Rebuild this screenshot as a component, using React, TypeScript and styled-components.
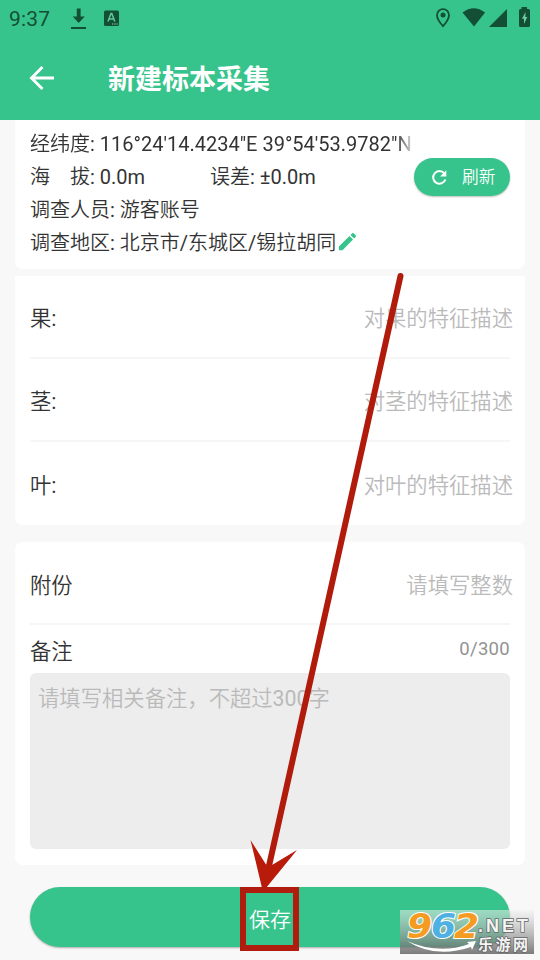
import React from "react";
import styled, { createGlobalStyle } from "styled-components";

const GREEN = "#36c48c";
const DARK = "#134f35";
const SANS = `Roboto, "Noto Sans CJK SC DemiLight", "Noto Sans CJK SC", sans-serif`;

const GlobalStyle = createGlobalStyle`
  * { box-sizing: border-box; }
  body { margin: 0; background: #f8f8f8; font-family: ${SANS}; }
`;

const Screen = styled.main`
  position: relative;
  width: 540px;
  height: 960px;
  overflow: hidden;
  display: flex;
  flex-direction: column;
  background: #f8f8f8;
  color: #333;
`;

const Header = styled.header`
  flex: none;
  height: 120px;
  background: ${GREEN};
`;

const StatusBar = styled.div`
  height: 36px;
  padding-left: 9px;
  padding-right: 9px;
  display: flex;
  align-items: center;
  color: ${DARK};
`;

const Clock = styled.span`
  width: 61px;
  font-size: 21px;
  line-height: 24px;
  letter-spacing: 0.2px;
  padding-top: 2px;
`;

const StatusIcons = styled.svg<{ $end?: boolean }>`
  display: block;
  margin-left: ${(p) => (p.$end ? "auto" : "0")};
`;

const TitleBar = styled.div`
  height: 84px;
  padding-left: 29px;
  display: flex;
  align-items: center;
  gap: 53px;
`;

const Title = styled.h1`
  margin: 0;
  padding-top: 4px;
  color: #fff;
  font-family: Roboto, "Noto Sans CJK SC", sans-serif;
  font-size: 27px;
  line-height: 36px;
  font-weight: 700;
`;

const InfoCard = styled.section`
  flex: none;
  height: 149px;
  margin: 0 15px;
  padding: 7px 15px 0;
  background: #fff;
  border-radius: 0 0 8px 8px;
  display: flex;
  justify-content: space-between;
`;

const InfoLines = styled.div`
  width: 384px;
  font-size: 20px;
  line-height: 33px;
  white-space: nowrap;
`;

const InfoLine = styled.div<{ $fade?: boolean }>`
  height: 33px;
  padding-top: 1px;
  display: flex;
  align-items: center;
  overflow: hidden;
  ${(p) => p.$fade && "mask-image: linear-gradient(to right, #000 366px, transparent 386px);"}
`;

const Half = styled.span`
  width: 180px;
  white-space: pre;
`;

const EditIcon = styled.svg`
  display: block;
  margin-bottom: 3px;
`;

const RefreshButton = styled.button`
  flex: none;
  width: 96px;
  height: 38px;
  margin: 31px 0 0 0;
  padding: 0 0 0 17px;
  border: 0;
  border-radius: 19px;
  background: ${GREEN};
  color: #fff;
  font: 16.7px/24px ${SANS};
  display: flex;
  align-items: center;
  gap: 14px;
  white-space: nowrap;
  box-shadow: 0 1px 2px rgba(0, 0, 0, 0.25);
`;

const RefreshLabel = styled.span`
  padding-top: 2px;
`;

const Card = styled.section<{ $clipped?: boolean }>`
  flex: none;
  margin: ${(p) => (p.$clipped ? "7px 15px 0" : "17px 15px 0")};
  height: ${(p) => (p.$clipped ? "249px" : "323px")};
  padding: 0 15px;
  background: #fff;
  border-radius: ${(p) => (p.$clipped ? "0 0 8px 8px" : "8px")};
`;

const Field = styled.label<{ $last?: boolean; $h?: number }>`
  height: ${(p) => p.$h ?? 83.5}px;
  padding-top: ${(p) => (p.$last ? 4 : 6)}px;
  display: flex;
  align-items: center;
  justify-content: space-between;
  font-size: 21.33px;
  line-height: 32px;
  border-bottom: ${(p) => (p.$last ? "0" : "2px solid #f6f6f6")};
`;

const Hint = styled.span`
  color: #bababa;
  margin-right: -3px;
`;

const NoteHead = styled.div`
  height: 48px;
  display: flex;
  align-items: center;
  justify-content: space-between;
  font-size: 21.33px;
`;

const Counter = styled.span`
  color: #929292;
  font-size: 18.5px;
  letter-spacing: 0.3px;
`;

const NoteBox = styled.div`
  height: 176px;
  padding: 10px 8px;
  border-radius: 6px;
  background: #ededed;
  color: #bababa;
  font-size: 21.33px;
  line-height: 32px;
`;

const SaveButton = styled.button`
  flex: none;
  height: 60px;
  margin: 22px 30px 0;
  padding: 6px 0 0;
  border: 0;
  border-radius: 30px;
  background: ${GREEN};
  color: #fff;
  font: 21px/32px ${SANS};
  box-shadow: 0 1px 2px rgba(0, 0, 0, 0.3);
`;

const Annotation = styled.svg`
  position: absolute;
  left: 0;
  top: 0;
  pointer-events: none;
`;

const Watermark = styled.svg`
  position: absolute;
  left: 400px;
  top: 910px;
  overflow: visible;
`;

const features = [
  { label: "果:", hint: "对果的特征描述" },
  { label: "茎:", hint: "对茎的特征描述" },
  { label: "叶:", hint: "对叶的特征描述" },
];

function LeftStatus() {
  return (
    <StatusIcons width="52" height="36" viewBox="70 0 52 36" fill={DARK}>
      <path d="M76.800 8.500h3.800v8h4.200L78.700 23l-6-6.500h4.100zM71 27h15v2H71z" />
      <rect x="104" y="10.500" width="15" height="15.500" rx="1.500" />
      <path d="m108 21.500 3-8h.8l3 8M109 19h5" fill="none" stroke="#5fc99b" strokeWidth="1.500" />
      <path d="M112 24h1.300m1 0h1.300m1 0h1.200" stroke="#8edab9" strokeWidth="1.200" />
    </StatusIcons>
  );
}

function RightStatus() {
  return (
    <StatusIcons $end width="96" height="36" viewBox="435 0 96 36" fill={DARK}>
      <path
        d="M443 9.200c-3.400 0-6 2.700-6 6 0 4.200 6 11 6 11s6-6.800 6-11c0-3.300-2.600-6-6-6z"
        fill="none"
        stroke={DARK}
        strokeWidth="1.800"
      />
      <circle cx="443" cy="15" r="2.500" />
      <path d="M462.500 12.500q11.300-8.500 22.600 0L474 26.500z" />
      <path d="M489 27 507 9v18z" />
      <path d="M521.500 7h5.500v2h1.500q1.500 0 1.500 1.500v15q0 1.500-1.500 1.500h-8q-1.500 0-1.500-1.500v-15q0-1.500 1.500-1.500h1z" />
      <path d="m525.500 12-3.500 6.700h2v5.300l3.300-7h-2z" fill="#6dcda3" />
    </StatusIcons>
  );
}

export default function App() {
  return (
    <>
      <GlobalStyle />
      <Screen>
        <Header>
          <StatusBar>
            <Clock>9:37</Clock>
            <LeftStatus />
            <RightStatus />
          </StatusBar>
          <TitleBar>
            <svg width="26" height="26" viewBox="0 0 26 26" fill="none" stroke="#fff" strokeWidth="2.900">
              <path d="M13.500 2 2.500 13l11 11M2.500 13H25" />
            </svg>
            <Title>新建标本采集</Title>
          </TitleBar>
        </Header>

        <InfoCard>
          <InfoLines>
            <InfoLine $fade>经纬度: 116°24'14.4234"E 39°54'53.9782"N</InfoLine>
            <InfoLine>
              <Half>海　拔: 0.0m</Half>
              <span>误差: ±0.0m</span>
            </InfoLine>
            <InfoLine>调查人员: 游客账号</InfoLine>
            <InfoLine>
              调查地区: 北京市/东城区/锡拉胡同
              <EditIcon width="23" height="23" viewBox="0 0 24 24" fill={GREEN}>
                <path d="M3 17.250V21h3.750L17.810 9.940l-3.750-3.750L3 17.250zM20.710 7.040a1 1 0 0 0 0-1.410l-2.340-2.340a1 1 0 0 0-1.410 0l-1.830 1.830 3.750 3.750 1.830-1.830z" />
              </EditIcon>
            </InfoLine>
          </InfoLines>
          <RefreshButton>
            <svg width="17" height="17" viewBox="0 0 17 17" fill="none" stroke="#fff" strokeWidth="2">
              <path d="M13.300 4.300A6.300 6.300 0 1 0 14.400 10.500" />
              <path d="M15.300 1.300v6.200H9.100z" fill="#fff" stroke="none" />
            </svg>
            <RefreshLabel>刷新</RefreshLabel>
          </RefreshButton>
        </InfoCard>

        <Card $clipped>
          {features.map((f, i) => (
            <Field key={f.label} $last={i === 2} $h={i === 0 ? 82.5 : 83.5}>
              <span>{f.label}</span>
              <Hint>{f.hint}</Hint>
            </Field>
          ))}
        </Card>

        <Card>
          <Field $h={83}>
            <span>附份</span>
            <Hint>请填写整数</Hint>
          </Field>
          <NoteHead>
            <span>备注</span>
            <Counter>0/300</Counter>
          </NoteHead>
          <NoteBox>请填写相关备注，不超过300字</NoteBox>
        </Card>

        <SaveButton>保存</SaveButton>

        <Annotation width="540" height="960" viewBox="0 0 540 960">
          <path d="M400.500 276 269 866" stroke="#b11b0c" strokeWidth="6" strokeLinecap="round" />
          <path d="M250.500 840 266 864.500 272 865 297 850 266 888h-4z" fill="#b81b0a" />
          <rect x="243" y="890" width="53" height="58" fill="none" stroke="#b01c0d" strokeWidth="6" />
        </Annotation>

        <Watermark width="134" height="44" viewBox="0 0 134 44">
          <defs>
            <linearGradient id="shade" x1="0" y1="0" x2="0" y2="1">
              <stop offset="0" stopColor="#f0f0f0" stopOpacity=".55" />
              <stop offset="1" stopColor="#5c5c5c" stopOpacity=".8" />
            </linearGradient>
          </defs>
          <rect width="134" height="44" fill="url(#shade)" />
          <g
            fontFamily="DejaVu Sans, sans-serif"
            fontWeight="700"
            fontStyle="italic"
            fontSize="33"
            stroke="#fff"
            strokeWidth="2"
            paintOrder="stroke"
          >
            <text x="7" y="28" textLength="25" lengthAdjust="spacingAndGlyphs" fill="#f59b22">9</text>
            <text x="31" y="28" textLength="25" lengthAdjust="spacingAndGlyphs" fill="#4eb0e3">6</text>
            <text x="54" y="28" textLength="25" lengthAdjust="spacingAndGlyphs" fill="#f59b22">2</text>
          </g>
          <path d="M7 31q32 14 62 3l-2-2 9-1-4 9-1-3Q35 49 7 31z" fill="#fff" />
          <g fill="#f4f4f4" stroke="#666" strokeWidth="1.500" paintOrder="stroke" fontWeight="700">
            <text x="78" y="21.500" fontSize="18" letterSpacing="3" fontFamily="Liberation Sans, sans-serif">.NET</text>
            <text x="78" y="40" fontSize="15" letterSpacing="2.500" fontFamily="Noto Sans CJK SC, sans-serif">乐游网</text>
          </g>
        </Watermark>
      </Screen>
    </>
  );
}
